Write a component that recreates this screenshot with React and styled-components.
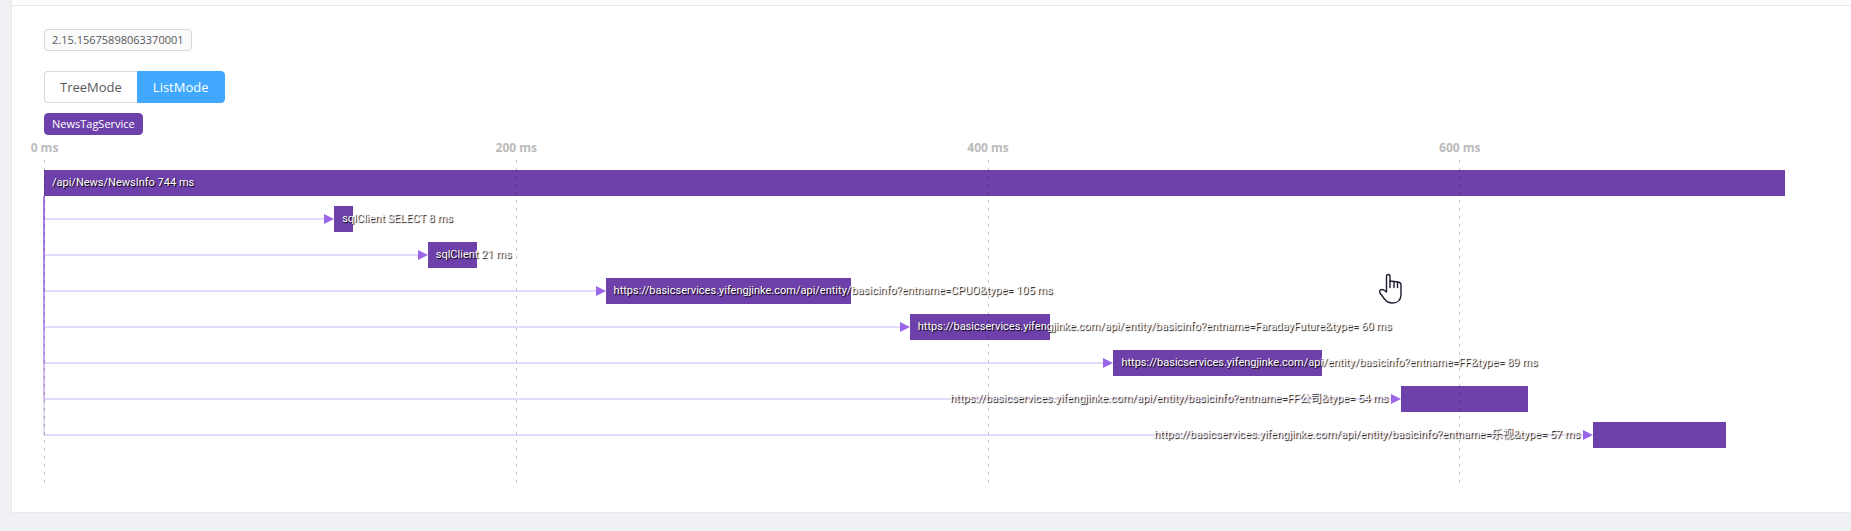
import React, { useState } from "react";
import styled, { createGlobalStyle, css } from "styled-components";

const GlobalStyle = createGlobalStyle`
  *, *::before, *::after { box-sizing: border-box; }
  body {
    margin: 0;
    background: #f0f1f5;
    color: #595959;
    font-family: "Open Sans", "Noto Sans", "Noto Sans CJK SC", sans-serif;
    font-size: 11px;
  }
`;

const ROW_HEIGHT = 26;
const ROW_GAP = 10;
const TOTAL = 744;
const TICKS = [0, 200, 400, 600];
const HOST = "https://basicservices.yifengjinke.com/api/entity/basicinfo";

const spans = [
  { name: "/api/News/NewsInfo", start: 0, duration: 744 },
  { name: "sqlClient SELECT", start: 124, duration: 8 },
  { name: "sqlClient", start: 164, duration: 21 },
  { name: `${HOST}?entname=CPUO&type=`, start: 240, duration: 105 },
  { name: `${HOST}?entname=FaradayFuture&type=`, start: 370, duration: 60 },
  { name: `${HOST}?entname=FF&type=`, start: 457, duration: 89 },
  { name: `${HOST}?entname=FF公司&type=`, start: 580, duration: 54 },
  { name: `${HOST}?entname=乐视&type=`, start: 662, duration: 57 },
];

const percent = (ms) => `${(ms / TOTAL) * 100}%`;

const Page = styled.main`
  position: relative;
  padding: 0 0 18px 11px;
`;

const Card = styled.section`
  background: #fff;
  border: solid #e8e8e8;
  border-width: 0 0 1px 1px;
  border-bottom-left-radius: 2px;
`;

const CardHeader = styled.header`
  height: 6px;
  border-bottom: 1px solid #e8e8e8;
`;

const CardBody = styled.div`
  display: flex;
  flex-direction: column;
  align-items: flex-start;
  padding: 23px 66px 29px 32px;
`;

const Tag = styled.span`
  height: 22px;
  padding: 0 7px;
  border: 1px solid #d9d9d9;
  border-radius: 4px;
  background: #fafafa;
  color: #595959;
  font-size: 11px;
  line-height: 20px;
`;

const ServiceTag = styled(Tag)`
  border-color: #6e40aa;
  background: #6e40aa;
  color: #fff;
`;

const ModeSwitch = styled.div`
  display: flex;
  margin: 20px 0 10px;
`;

const ModeButton = styled.button`
  height: 32px;
  padding: 0 15px;
  border: 1px solid #d9d9d9;
  background: #fff;
  color: #595959;
  font-family: inherit;
  font-size: 13px;
  line-height: 30px;
  cursor: pointer;

  &:first-child { border-radius: 4px 0 0 4px; border-right: 0; }
  &:last-child { border-radius: 0 4px 4px 0; }

  ${(p) =>
    p.$active &&
    css`
      border-color: #40a9ff;
      background: #40a9ff;
      color: #fff;
    `}
`;

const Chart = styled.div`
  position: relative;
  align-self: stretch;
  padding: 35px 0;
`;

const Axis = styled.div`
  position: absolute;
  inset: 0 -14px 0 0;
  z-index: 1;
  pointer-events: none;
`;

const Tick = styled.div`
  position: absolute;
  top: 0;
  bottom: 0;
  width: 1px;
  display: flex;
  flex-direction: column;
  align-items: center;
`;

const TickLabel = styled.span`
  height: 25px;
  color: #bbb;
  font-size: 12px;
  font-weight: 700;
  line-height: 26px;
  white-space: nowrap;
`;

const TickLine = styled.div`
  flex: 1;
  width: 1px;
  background: repeating-linear-gradient(rgba(0, 0, 0, 0.22) 0 3px, transparent 3px 8px);
`;

const Rows = styled.div`
  display: flex;
  flex-direction: column;
  gap: ${ROW_GAP}px;
`;

const Row = styled.div`
  display: flex;
  height: ${ROW_HEIGHT}px;
`;

const Connector = styled.div`
  position: relative;
  flex: none;
  display: flex;
  align-items: center;
  justify-content: flex-end;
`;

const ConnectorLine = styled.div`
  flex: 1;
  height: 2px;
  background: #e6dafb;
`;

const Stem = styled.div`
  position: absolute;
  left: -1px;
  bottom: 50%;
  width: 2px;
  background: rgba(154, 99, 232, 0.25);
`;

const Arrow = styled.svg`
  flex: none;
  width: 10px;
  height: 10px;
  fill: #9b66e8;
`;

const Bar = styled.div`
  flex: none;
  background: #6e40aa;
`;

const Label = styled.span`
  display: block;
  padding-left: 8px;
  color: #fff;
  font-family: Roboto, "Noto Sans CJK SC", sans-serif;
  font-size: 11px;
  line-height: 26px;
  text-shadow: 1px 1px 1px #000;
  white-space: nowrap;

  ${(p) =>
    p.$before &&
    css`
      position: absolute;
      right: 13px;
      top: 0;
      padding: 0;
    `}
`;

const Pointer = styled.svg`
  position: absolute;
  left: 1379px;
  top: 273px;
  z-index: 2;
  width: 23px;
  height: 32px;
`;

function SpanRow({ span, index }) {
  const before = span.start > TOTAL * 0.75;
  const label = (
    <Label $before={before}>
      {span.name} {span.duration} ms
    </Label>
  );
  return (
    <Row>
      {index > 0 && (
        <Connector style={{ width: percent(span.start) }}>
          <Stem style={{ height: index * (ROW_HEIGHT + ROW_GAP) - ROW_HEIGHT / 2 }} />
          <ConnectorLine />
          <Arrow viewBox="0 0 10 10">
            <path d="M0 0L10 5L0 10Z" />
          </Arrow>
          {before && label}
        </Connector>
      )}
      <Bar style={{ width: percent(span.duration) }}>{!before && label}</Bar>
    </Row>
  );
}

export default function App() {
  const [mode, setMode] = useState("ListMode");
  return (
    <Page>
      <GlobalStyle />
      <Card>
        <CardHeader />
        <CardBody>
          <Tag>2.15.15675898063370001</Tag>
          <ModeSwitch>
            {["TreeMode", "ListMode"].map((name) => (
              <ModeButton
                key={name}
                type="button"
                aria-pressed={mode === name}
                $active={mode === name}
                onClick={() => setMode(name)}
              >
                {name}
              </ModeButton>
            ))}
          </ModeSwitch>
          <ServiceTag>NewsTagService</ServiceTag>
          <Chart>
            <Axis>
              {TICKS.map((t) => (
                <Tick key={t} style={{ left: percent(t) }}>
                  <TickLabel>{t} ms</TickLabel>
                  <TickLine />
                </Tick>
              ))}
            </Axis>
            <Rows>
              {spans.map((span, i) => (
                <SpanRow key={i} span={span} index={i} />
              ))}
            </Rows>
          </Chart>
        </CardBody>
      </Card>
      <Pointer viewBox="0 0 23 32" fill="#fff" stroke="#1c1b2e" strokeWidth="1.4" strokeLinejoin="round" strokeLinecap="round" aria-hidden="true">
        <path d="M7.500 19V3.500Q7.500 1.500 9.200 1.500Q11 1.500 11 3.500V8L19 9Q22 9.500 22 12V22Q21.500 30 13.500 30Q8.500 30 5.500 26L1.300 20.500Q-.2 18 1.600 16.800Q4 15.800 7.500 19Z" />
        <path d="M11 8V14.500M15 8.500V14.500M18.500 9.200V14.500" fill="none" />
      </Pointer>
    </Page>
  );
}
